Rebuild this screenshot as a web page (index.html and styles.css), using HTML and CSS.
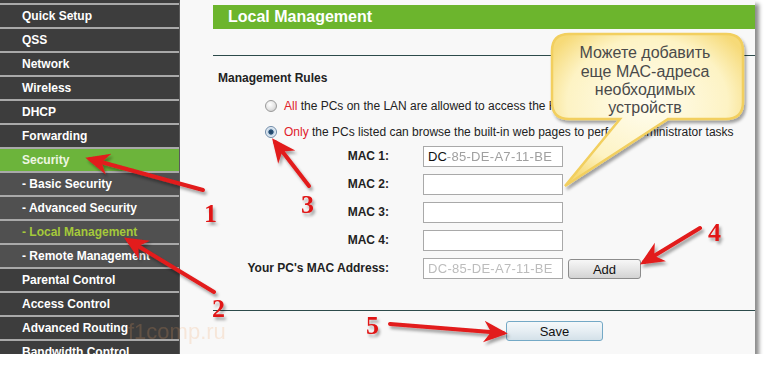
FILE: index.html
```html
<!DOCTYPE html>
<html lang="en">
<head>
    <meta charset="UTF-8">
    <meta name="viewport" content="width=device-width, initial-scale=1.0">
    <title>Local Management</title>
    <link rel="stylesheet" href="styles.css">
</head>
<body>
    <div class="window">
        <nav class="menu">
            <div class="item">Quick Setup</div>
            <div class="item">QSS</div>
            <div class="item">Network</div>
            <div class="item">Wireless</div>
            <div class="item">DHCP</div>
            <div class="item">Forwarding</div>
            <div class="item active">Security</div>
            <div class="item sub">- Basic Security</div>
            <div class="item sub">- Advanced Security</div>
            <div class="item sub current">- Local Management</div>
            <div class="item sub">- Remote Management</div>
            <div class="item">Parental Control</div>
            <div class="item">Access Control</div>
            <div class="item">Advanced Routing</div>
            <div class="item">Bandwidth Control</div>
        </nav>

        <main class="content">
            <h1 class="title">Local Management</h1>
            <div class="rule"></div>

            <h2 class="section">Management Rules</h2>
            <label class="option">
                <input type="radio" name="mode">
                <span><em>All</em> the PCs on the LAN are allowed to access the Router's Web-Based Utility</span>
            </label>
            <label class="option">
                <input type="radio" name="mode" checked>
                <span><em>Only</em> the PCs listed can browse the built-in web pages to perform Administrator tasks</span>
            </label>

            <div class="mac-grid">
                <span class="mac-label">MAC 1:</span>
                <div class="mac-cell"><div class="field">DC<span class="hidden">-85-DE-A7-11-BE</span></div></div>
                <span class="mac-label">MAC 2:</span>
                <div class="mac-cell"><div class="field"></div></div>
                <span class="mac-label">MAC 3:</span>
                <div class="mac-cell"><div class="field"></div></div>
                <span class="mac-label">MAC 4:</span>
                <div class="mac-cell"><div class="field"></div></div>
                <span class="mac-label">Your PC's MAC Address:</span>
                <div class="mac-cell">
                    <div class="field"><span class="hidden faded">DC-85-DE-A7-11-BE</span></div>
                    <button class="btn add">Add</button>
                </div>
            </div>

            <div class="rule bottom"></div>
            <div class="actions">
                <button class="btn save">Save</button>
            </div>
        </main>
    </div>

    <svg class="notes" width="769" height="369" viewBox="0 0 769 369">
        <defs>
            <marker id="head" viewBox="0 0 10 10" refX="8" refY="5" markerUnits="userSpaceOnUse" markerWidth="24" markerHeight="24" orient="auto">
                <path d="M0,0.5 L10,5 L0,9.5 L3,5 Z" fill="#e21b1b"/>
            </marker>
            <filter id="shade" x="-20%" y="-20%" width="140%" height="140%">
                <feDropShadow dx="2" dy="3" stdDeviation="1.6" flood-color="#000" flood-opacity="0.35"/>
            </filter>
            <radialGradient id="bubble" cx="50%" cy="45%" r="60%">
                <stop offset="0" stop-color="#fffdf0"/>
                <stop offset="0.7" stop-color="#fdf3c4"/>
                <stop offset="1" stop-color="#f6da78"/>
            </radialGradient>
        </defs>

        <text class="watermark" x="128" y="339">f1comp.ru</text>

        <g filter="url(#shade)">
            <path class="callout" d="M569,34 H726 Q743,34 743,51 V102 Q743,119 726,119 H668 L565,186 L620,119 H569 Q552,119 552,102 V51 Q552,34 569,34 Z"/>
        </g>
        <text class="callout-text" x="645" y="58">Можете добавить</text>
        <text class="callout-text" x="645" y="77">еще МАС-адреса</text>
        <text class="callout-text" x="645" y="95">необходимых</text>
        <text class="callout-text" x="645" y="113">устройств</text>

        <g filter="url(#shade)">
            <line class="arrow" x1="203" y1="190" x2="90" y2="159" marker-end="url(#head)"/>
            <line class="arrow" x1="214" y1="292" x2="128" y2="240" marker-end="url(#head)"/>
            <line class="arrow" x1="309" y1="186" x2="275" y2="142" marker-end="url(#head)"/>
            <line class="arrow" x1="700" y1="228" x2="644" y2="262" marker-end="url(#head)"/>
            <line class="arrow" x1="390" y1="324" x2="503" y2="333" marker-end="url(#head)"/>

            <text class="num" x="204" y="222">1</text>
            <text class="num" x="212" y="317">2</text>
            <text class="num" x="301" y="213">3</text>
            <text class="num" x="708" y="241">4</text>
            <text class="num" x="366" y="334">5</text>
        </g>
    </svg>
</body>
</html>
```

FILE: styles.css
```css
body {
    margin: 0;
    background-color: #fff;
    font-family: "Liberation Sans", Arial, sans-serif;
    color: #222;
}

.window {
    display: flex;
    width: 755px;
    height: 354px;
    overflow: hidden;
    box-shadow: 4px 4px 4px rgba(0, 0, 0, 0.45);
}

/* left menu */

.menu {
    width: 179px;
    flex-shrink: 0;
    border-top: 3px solid #3d3d3d;
    border-right: 1px solid #5a5a5a;
    background-color: #a9a9a9;
    overflow: hidden;
}

.item {
    height: 22px;
    margin-top: 2px;
    padding-left: 22px;
    line-height: 22px;
    font-size: 12px;
    font-weight: bold;
    color: #fff;
    background-color: #3d3d3d;
    white-space: nowrap;
}

.item.sub {
    background-color: #505050;
}

.item.active {
    background-color: #6cb43b;
    color: #eef6e2;
}

.item.current {
    color: #a5c93a;
}

/* main panel */

.content {
    flex: 1;
    padding: 5px 0 0 33px;
    background-color: #f8f8f8;
}

.title {
    margin: 0;
    height: 24px;
    padding-left: 15px;
    line-height: 24px;
    font-size: 16px;
    color: #fff;
    background-color: #6cb52d;
}

.rule {
    height: 1px;
    margin-top: 26px;
    background-color: #2d4b4b;
}

.rule.bottom {
    margin-top: 31px;
}

.section {
    margin: 15px 0 0 5px;
    line-height: 14px;
    font-size: 12px;
}

.option {
    display: flex;
    align-items: center;
    height: 26px;
    padding-left: 52px;
    font-size: 12px;
    white-space: nowrap;
}

.option:first-of-type {
    margin-top: 8px;
}

.option em {
    font-style: normal;
    color: #e0202a;
}

.option input {
    appearance: none;
    width: 12px;
    height: 12px;
    margin: 0 7px 0 0;
    border: 1px solid #9a9a9a;
    border-radius: 50%;
    background: radial-gradient(circle at 40% 35%, #fff 0, #e4e4e4 55%, #bdbdbd 100%);
}

.option input:checked {
    border-color: #6d8aa8;
    background: radial-gradient(circle, #1f3f63 0, #2c5479 32%, #bcd0e2 42%, #eef3f8 70%, #a9bfd4 100%);
}

.mac-grid {
    display: grid;
    grid-template-columns: 176px auto;
    grid-auto-rows: 21px;
    column-gap: 34px;
    row-gap: 7px;
    margin-top: 1px;
}

.mac-label {
    text-align: right;
    line-height: 21px;
    font-size: 12px;
    font-weight: bold;
}

.mac-cell {
    display: flex;
    gap: 5px;
}

.field {
    width: 134px;
    height: 19px;
    padding-left: 4px;
    border: 1px solid #a9a9a9;
    background-color: #fff;
    line-height: 19px;
    font-size: 13px;
    color: #111;
    overflow: hidden;
}

/* address is blurred out in the screenshot */
.hidden {
    color: #a0a0a0;
    letter-spacing: 0.3px;
    filter: blur(0.7px);
}

.faded {
    color: #bcbcbc;
}

.btn {
    height: 20px;
    padding: 0;
    font-family: "Liberation Sans", Arial, sans-serif;
    font-size: 13px;
    color: #111;
    border-radius: 3px;
    cursor: pointer;
}

.add {
    width: 73px;
    margin-top: 1px;
    border: 1px solid #8c8c8c;
    background: linear-gradient(#f7f7f7, #e6e6e6 50%, #d3d3d3);
}

.actions {
    padding: 10px 0 0 293px;
}

.save {
    width: 97px;
    border: 1px solid #74a9c6;
    background: linear-gradient(#f4f8fa, #e6eef3 50%, #d4e1e9);
}

/* annotations drawn over the screenshot */

.notes {
    position: absolute;
    top: 0;
    left: 0;
    pointer-events: none;
}

.callout {
    fill: url(#bubble);
    stroke: #f2cf5e;
    stroke-width: 2.5;
}

.callout-text {
    font-family: "Liberation Sans", Arial, sans-serif;
    font-size: 16px;
    fill: #4a4a4a;
    text-anchor: middle;
}

.arrow {
    stroke: #e21b1b;
    stroke-width: 4;
    stroke-linecap: round;
}

.num {
    font-family: "Liberation Serif", "Times New Roman", serif;
    font-size: 26px;
    font-weight: bold;
    fill: #e01515;
}

.watermark {
    font-family: "Liberation Sans", Arial, sans-serif;
    font-size: 22px;
    fill: #f0a060;
    opacity: 0.2;
}
```
